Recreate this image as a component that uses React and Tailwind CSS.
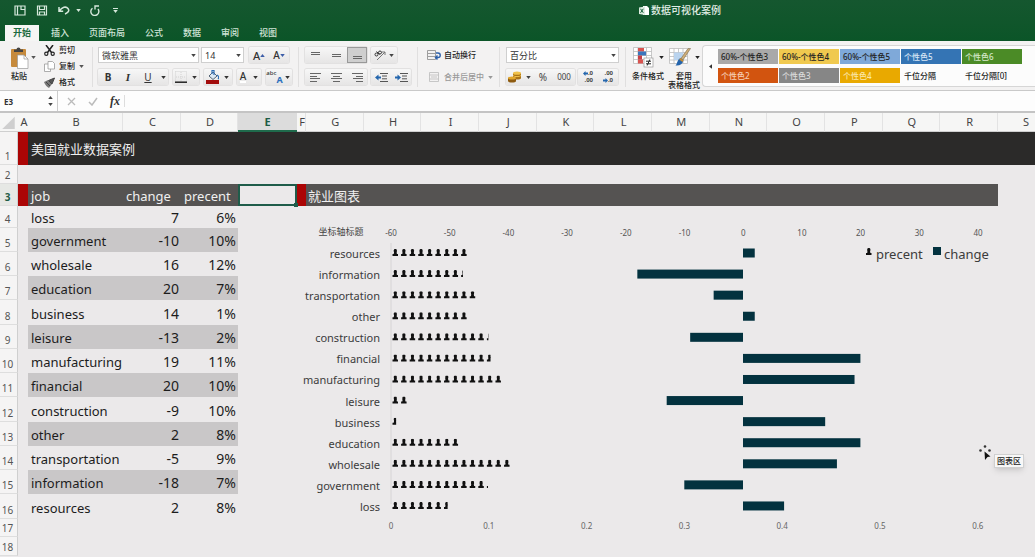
import React from "react";

const Caret = ({ className = "" }) => (
  <svg viewBox="0 0 6 4" className={`h-[3px] w-[5px] shrink-0 ${className}`} aria-hidden="true">
    <path d="M0 0h6L3 4z" fill="currentColor" />
  </svg>
);

const Icon = ({ box, className = "h-3 w-3", children }) => (
  <svg viewBox={box} className={`shrink-0 ${className}`} fill="none" aria-hidden="true">
    {children}
  </svg>
);

/* ---------- title bar and tabs ---------- */

function TitleBar() {
  return (
    <div className="grid h-5 grid-cols-[1fr_auto_1fr] items-center text-[#d5e8db]">
      <div className="flex items-center pl-[14px]">
        <button aria-label="新建" className="mr-[10px]">
          <Icon box="0 0 12 11" className="h-[11px] w-3">
            <path d="M1 1h10v9H1zM3.500 1v9M7 1v3.500h4" stroke="currentColor" strokeWidth="1.200" />
          </Icon>
        </button>
        <button aria-label="保存" className="mr-[10px]">
          <Icon box="0 0 12 11" className="h-[11px] w-3">
            <path d="M1.500 1h9v9h-9zM3.500 1v3.500h5V1M3.500 10V7h5v3" stroke="currentColor" strokeWidth="1.200" />
          </Icon>
        </button>
        <button aria-label="撤销" className="flex items-center gap-[6px]">
          <Icon box="0 0 12 10" className="h-[10px] w-3">
            <path d="M1 2v4.200h4.200M1.300 6C4 2 8 1 10 3.500S9.500 8 7 9" stroke="currentColor" strokeWidth="1.500" />
          </Icon>
          <Caret className="h-[2px] w-[3px]" />
        </button>
        <button aria-label="恢复" className="ml-2">
          <Icon box="0 0 12 11" className="h-[11px] w-3">
            <path d="M3.500 3.200A4 4 0 1 0 9 4M6 4.500V1h4" stroke="currentColor" strokeWidth="1.400" />
          </Icon>
        </button>
        <button aria-label="自定义工具栏" className="ml-3 flex flex-col items-center gap-[1px]">
          <span className="h-px w-[5px] bg-current" />
          <Caret />
        </button>
      </div>
      <h1 className="col-start-2 ml-[325px] flex items-center gap-[2px] text-[10px] leading-none font-medium text-[#e0ece4]">
        <Icon box="0 0 10 11" className="h-[11px] w-[10px]">
          <path d="M4 1h4l2 2v7H4z" fill="#fff" />
          <path d="M0 2.500L6 1.500v8.500L0 9z" fill="#dcebe0" />
          <path d="M1.500 3.800l2.800 4M4.300 3.800l-2.800 4" stroke="#15603a" />
        </Icon>
        数据可视化案例
      </h1>
    </div>
  );
}

const tabs = ["开始", "插入", "页面布局", "公式", "数据", "审阅", "视图"];

function Tabs() {
  return (
    <nav className="mt-[5px] flex gap-1 pl-[5px]">
      {tabs.map((t, i) => (
        <button
          key={t}
          className={
            i === 0
              ? "h-4 bg-[#f5f5f4] px-2 text-[9px] leading-4 font-bold text-[#1b6b41]"
              : "h-4 px-2 text-[9px] leading-4 font-medium text-[#cfe3d6]"
          }
        >
          {t}
        </button>
      ))}
    </nav>
  );
}

/* ---------- ribbon ---------- */

const Group = ({ children, className = "" }) => (
  <div className={`flex h-4 shrink-0 items-center rounded-[2px] bg-linear-to-b from-[#f7f7f7] to-[#e6e5e5] ring-1 ring-[#e2e1e1] ${className}`}>
    {children}
  </div>
);

const Tool = ({ label, className = "w-5", children }) => (
  <button aria-label={label} className={`flex h-4 items-center justify-center ${className}`}>
    {children}
  </button>
);

const Divider = ({ className = "" }) => <div className={`h-10 w-px shrink-0 bg-[#e0dfdf] ${className}`} />;

function Picker({ label, value, className }) {
  return (
    <label className={`relative flex h-4 items-center border border-[#cfcfcf] bg-white ${className}`}>
      <select aria-label={label} defaultValue={value} className="h-full w-full appearance-none bg-transparent pl-[3px] text-[9px] leading-none text-[#333] outline-none">
        <option>{value}</option>
      </select>
      <Caret className="pointer-events-none absolute right-[2px] text-[#444]" />
    </label>
  );
}

const Lines = ({ d }) => (
  <Icon box="0 0 11 9" className="h-[9px] w-[11px]">
    <path d={d} stroke="#666" strokeWidth="1" />
  </Icon>
);

const alignV = [
  ["顶端对齐", "M1 1.500h9M1 3.500h9"],
  ["垂直居中", "M1 3.500h9M1 5.500h9"],
  ["底端对齐", "M1 5.500h9M1 7.500h9"],
];
const alignH = [
  ["左对齐", "M0 .500h11M0 3.500h7M0 5.500h10M0 8.500h7"],
  ["居中", "M0 .500h11M2 3.500h7M0 5.500h11M2 8.500h7"],
  ["右对齐", "M0 .500h11M4 3.500h7M1 5.500h10M4 8.500h7"],
];

function Clipboard() {
  return (
    <div className="flex shrink-0">
      <button className="flex w-[26px] flex-col items-center text-[8px] leading-[10px] font-medium text-[#222]">
        <Icon box="0 0 19 22" className="mb-[2px] h-[22px] w-[19px]">
          <rect x="1" y="2" width="15" height="18" rx="1" fill="#c68a3c" />
          <path d="M4 5V2.500h2.500a2 2 0 0 1 4 0H13V5z" fill="#444" />
          <path d="M7.500 8H14l4 4v9.500H7.500z" fill="#fff" stroke="#999" strokeWidth=".7" />
          <path d="M14 8v4h4" stroke="#999" strokeWidth=".7" />
        </Icon>
        粘贴
      </button>
      <Caret className="mt-[9px] -ml-px text-[#555]" />
      <div className="-mt-[2px] ml-2 flex flex-col gap-[6px] text-[8px] leading-[10px] font-medium text-[#222]">
        <button className="flex h-[10px] items-center gap-1">
          <Icon box="0 0 11 11" className="h-[11px] w-[11px]">
            <path d="M2 0l5.500 7.500M9 0L3.500 7.500" stroke="#222" strokeWidth="1.500" />
            <circle cx="2.300" cy="8.800" r="1.600" stroke="#222" strokeWidth="1.200" />
            <circle cx="8.700" cy="8.800" r="1.600" stroke="#222" strokeWidth="1.200" />
          </Icon>
          剪切
        </button>
        <button className="flex h-[10px] items-center gap-1">
          <Icon box="0 0 11 11" className="h-[11px] w-[11px]">
            <path d="M.500 3h4l2 2v5.500h-6z" fill="#fff" stroke="#999" strokeWidth=".8" />
            <path d="M4 .500h4.500l2 2V8H4z" fill="#fff" stroke="#999" strokeWidth=".8" />
          </Icon>
          复制
          <Caret className="text-[#555]" />
        </button>
        <button className="flex h-[10px] items-center gap-1">
          <Icon box="0 0 11 11" className="h-[11px] w-[11px]">
            <path d="M0 5l4-2 4 4-3 4C3 10 1 8 0 5z" fill="#777" />
            <path d="M2 5l4 4M4.500 3.500L8 7l2.500-6z" stroke="#444" strokeWidth="1" fill="#555" />
          </Icon>
          格式
        </button>
      </div>
    </div>
  );
}

function FontTools() {
  return (
    <div className="flex shrink-0 flex-col gap-[6px]">
      <div className="flex">
        <Picker label="字体" value="微软雅黑" className="w-[101px]" />
        <Picker label="字号" value="14" className="ml-[2px] w-[43px]" />
        <Group className="ml-[5px]">
          <Tool label="增大字号">
            <span className="text-[11px] leading-none font-medium text-[#333]">A</span>
            <Caret className="rotate-180 text-[#3c5da8]" />
          </Tool>
          <Tool label="减小字号">
            <span className="text-[10px] leading-none font-medium text-[#333]">A</span>
            <Caret className="text-[#3c5da8]" />
          </Tool>
        </Group>
      </div>
      <div className="flex gap-[5px] text-[#333]">
        <Group>
          <Tool label="加粗"><b className="text-[10px] leading-none">B</b></Tool>
          <Tool label="倾斜"><i className="font-['Liberation_Serif',serif] text-[11px] leading-none font-bold">I</i></Tool>
          <Tool label="下划线"><u className="text-[10px] leading-none">U</u></Tool>
          <Tool label="下划线选项" className="w-[10px]"><Caret /></Tool>
        </Group>
        <Group>
          <Tool label="边框" className="w-4">
            <Icon box="0 0 12 12">
              <path d="M.500.500h11v10M.500.500v10M6 1v10M1 6h10" stroke="#d2d2d2" strokeDasharray="1 1" />
              <path d="M0 11.200h12" stroke="#222" strokeWidth="1.500" />
            </Icon>
          </Tool>
          <Tool label="边框选项" className="w-[10px]"><Caret /></Tool>
        </Group>
        <Group>
          <Tool label="填充颜色" className="w-4">
            <Icon box="0 0 13 14" className="h-[14px] w-[13px]">
              <path d="M3 6l4-4 4 4-4 3.500z" fill="#dce9f5" stroke="#456" strokeWidth=".9" />
              <path d="M6 4V.500h2V5M11 5c2 1 2 3 1 4" stroke="#2d6db5" strokeWidth="1.200" />
              <rect y="10" width="13" height="4" fill="#a30d0d" />
            </Icon>
          </Tool>
          <Tool label="填充选项" className="w-3"><Caret /></Tool>
        </Group>
        <Group>
          <Tool label="字体颜色" className="w-3">
            <span className="border-b-2 border-white text-[10px] leading-[10px] font-medium">A</span>
          </Tool>
          <Tool label="字体颜色选项" className="w-3"><Caret /></Tool>
        </Group>
        <Group>
          <Tool label="拼音" className="w-[17px]">
            <span className="self-start text-[6px] leading-[8px] font-medium">abc</span>
            <span className="self-end text-[9px] leading-[10px] font-bold text-[#2c6fbd]">A</span>
          </Tool>
          <Tool label="拼音选项" className="w-[9px]"><Caret /></Tool>
        </Group>
      </div>
    </div>
  );
}

function AlignTools() {
  return (
    <div className="flex shrink-0 flex-col gap-[6px] text-[#444]">
      <div className="flex gap-1">
        <Group>
          {alignV.map(([n, d], i) => (
            <Tool key={n} label={n} className={i === 2 ? "w-5 border border-[#999] bg-[#cfcfcf]" : "w-[21px]"}>
              <Lines d={d} />
            </Tool>
          ))}
        </Group>
        <Group>
          <Tool label="方向" className="w-[26px] gap-[3px]">
            <Icon box="0 0 12 12">
              <path d="M3 11L11 3M8 3h3v3" stroke="#777" />
              <circle cx="2.500" cy="5.500" r="1.500" stroke="#333" />
              <path d="M2.500 2.500l3 3" stroke="#333" />
              <circle cx="6" cy="3.500" r="1.500" stroke="#333" />
            </Icon>
            <Caret />
          </Tool>
        </Group>
      </div>
      <div className="flex gap-1">
        <Group>
          {alignH.map(([n, d], i) => (
            <Tool key={n} label={n} className={i === 2 ? "w-5" : "w-[21px]"}>
              <Lines d={d} />
            </Tool>
          ))}
        </Group>
        <Group>
          <Tool label="减少缩进">
            <Icon box="0 0 13 9" className="h-[9px] w-[13px]">
              <path d="M0 4.500L3.500 1.500v2H6v2H3.500v2z" fill="#2466ad" />
              <path d="M5 .500h8M7 3h5M7 5.800h5M5 8.500h8" stroke="#555" />
            </Icon>
          </Tool>
          <Tool label="增加缩进">
            <Icon box="0 0 13 9" className="h-[9px] w-[13px]">
              <path d="M6 4.500L2.500 1.500v2H0v2h2.500v2z" fill="#2466ad" />
              <path d="M5 .500h8M7 3h5M7 5.800h5M5 8.500h8" stroke="#555" />
            </Icon>
          </Tool>
        </Group>
      </div>
    </div>
  );
}

function WrapTools() {
  return (
    <div className="flex shrink-0 flex-col gap-[6px] text-[8px] leading-none font-medium">
      <button className="flex h-4 items-center gap-[3px] text-[#222]">
        <Icon box="0 0 14 10" className="h-[10px] w-[14px]">
          <path d="M.500.500h8v9h-8zM1 3.500h7M1 6.500h7" stroke="#888" strokeWidth=".8" />
          <path d="M9 3h2a2 2 0 0 1 0 4.500H9M10.500 5.500L8.500 7.500l2 2" stroke="#2f62ac" strokeWidth="1.400" />
        </Icon>
        自动换行
      </button>
      <button className="flex h-4 items-center gap-[3px] text-[#999]">
        <Icon box="0 0 14 10" className="h-[10px] w-[14px]">
          <path d="M2.500.500h9v9h-9zM2.500 3h9M2.500 7h9M4 5h6" stroke="#bbb" strokeWidth=".8" />
        </Icon>
        合并后居中
        <Caret className="ml-px h-[2px] w-1" />
      </button>
    </div>
  );
}

function NumberTools() {
  return (
    <div className="flex shrink-0 flex-col gap-[6px] text-[#444]">
      <Picker label="数字格式" value="百分比" className="w-[113px]" />
      <div className="flex gap-[3px]">
        <Group>
          <Tool label="会计格式" className="w-[27px] gap-1">
            <Icon box="0 0 14 12" className="h-3 w-[14px]">
              <path d="M5 2v5c0 2 8 2 8 0V2z" fill="#a87116" />
              <ellipse cx="9" cy="2.200" rx="4" ry="1.600" fill="#f0c14b" />
              <path d="M5 4.500c1 1.500 7 1.500 8 0" stroke="#f0c14b" />
              <path d="M0 7v3c0 2 8 2 8 0V7z" fill="#8e5b10" />
              <ellipse cx="4" cy="7" rx="4" ry="1.600" fill="#e0a52d" />
            </Icon>
            <Caret />
          </Tool>
          <Tool label="百分比样式"><span className="text-[10px] leading-none">%</span></Tool>
          <Tool label="千位分隔样式" className="w-[22px]"><span className="text-[8px] leading-none">000</span></Tool>
        </Group>
        <Group>
          <Tool label="增加小数位数" className="w-5">
            <span className="flex flex-col text-right text-[6px] leading-[7px] font-bold">
              <span className="flex items-center justify-end">
                <Icon box="0 0 5 5" className="h-[5px] w-[5px]"><path d="M0 2.500L2.500 0v1.500H5v2H2.500V5z" fill="#2466ad" /></Icon>.0
              </span>
              <span>.00</span>
            </span>
          </Tool>
          <Tool label="减少小数位数" className="w-5">
            <span className="flex flex-col text-right text-[6px] leading-[7px] font-bold">
              <span>.00</span>
              <span className="flex items-center justify-end">
                <Icon box="0 0 5 5" className="h-[5px] w-[5px]"><path d="M5 2.500L2.500 0v1.500H0v2h2.500V5z" fill="#2466ad" /></Icon>.0
              </span>
            </span>
          </Tool>
        </Group>
      </div>
    </div>
  );
}

function FormatTools() {
  return (
    <div className="flex shrink-0 text-[8px] leading-[9px] font-medium text-[#222]">
      <button className="flex w-8 flex-col items-center whitespace-nowrap">
        <span className="mb-[3px] flex h-[21px] items-start gap-[5px]">
          <Icon box="0 0 21 21" className="h-[21px] w-[21px]">
            <path d="M.500.500h18v16H.500zM.500 4.500h18M.500 8.500h18M.500 12.500h18M5 .500v16M13.500.500v16" fill="#fff" stroke="#bbb" strokeWidth=".8" />
            <path d="M5 1h6v3.500H5zM5 12.500h5v4H5z" fill="#d9534f" />
            <path d="M5 4.500h8v4H5z" fill="#3b76bd" />
            <path d="M5 8.500h4v4H5z" fill="#c73f45" />
            <rect x="11" y="11" width="9" height="9" fill="#fff" stroke="#999" strokeWidth=".7" />
            <path d="M13 14.200h5M13 16.800h5M16.800 12.500l-2.600 6" stroke="#222" strokeWidth="1" />
          </Icon>
          <Caret className="mt-[9px]" />
        </span>
        条件格式
      </button>
      <button className="ml-1 flex w-8 flex-col items-center whitespace-nowrap">
        <span className="mb-[3px] flex h-[21px] items-start gap-1">
          <Icon box="0 0 22 21" className="h-[21px] w-[22px]">
            <path d="M.500 1.500h18v15H.500zM.500 5.500h18M.500 9.500h18M.500 13h18M5 1.500v15M9.500 1.500v15M14 1.500v15" fill="#fff" stroke="#bbb" strokeWidth=".8" />
            <path d="M5 5.500h9v7.500H5z" fill="#b9d3ee" />
            <path d="M21.500 1.500L14 13l-2-1.500 7-10z" fill="#cfae78" stroke="#7b6b4e" strokeWidth=".6" />
            <path d="M11.500 11l3 2.500c-1 4-4 5.500-8 5 2-1.500 1.500-6 5-7.500z" fill="#2464ac" />
            <path d="M11.500 11l3 2.500-1 1.500-3.300-2.600z" fill="#c78c32" />
          </Icon>
          <Caret className="mt-[9px]" />
        </span>
        <span className="block">套用</span>
        <span className="block">表格格式</span>
      </button>
    </div>
  );
}

const styles = [
  ["60%-个性色3", "bg-[#a9a9a9] text-[#222]"],
  ["60%-个性色4", "bg-[#f0c94f] text-[#222]"],
  ["60%-个性色5", "bg-[#7fa9d9] text-[#222]"],
  ["个性色5", "bg-[#3474b4] text-[#d7e6f5]"],
  ["个性色6", "bg-[#4b8b26] text-[#d5e8c8]"],
  ["个性色2", "bg-[#d2540f] text-[#f6cdb4]"],
  ["个性色3", "bg-[#868686] text-[#dcdcdc]"],
  ["个性色4", "bg-[#e9a900] text-[#fbe6a8]"],
  ["千位分隔", "text-[#222]"],
  ["千位分隔[0]", "text-[#222]"],
];

function StyleGallery() {
  return (
    <div className="-mt-[2px] flex h-[42px] min-w-0 flex-1 items-center overflow-hidden rounded-l-sm border border-r-0 border-[#d6d6d6] bg-[#fcfcfc]">
      <button aria-label="上一组样式" className="flex h-full w-[15px] shrink-0 items-center justify-center text-[#333]">
        <Caret className="rotate-90" />
      </button>
      <div className="grid shrink-0 grid-cols-[repeat(5,60px)] gap-x-px gap-y-1">
        {styles.map(([n, c]) => (
          <button key={n} className={`h-[15px] px-[3px] text-left text-[8px] leading-[15px] font-medium whitespace-nowrap ${c}`}>
            {n}
          </button>
        ))}
      </div>
    </div>
  );
}

function Ribbon() {
  return (
    <div className="flex h-[50px] items-start border-b border-[#c9c9c9] bg-[#f3f2f2] pt-[6px] pl-[6px]">
      <Clipboard />
      <Divider className="mr-[5px] ml-2" />
      <FontTools />
      <Divider className="mx-[6px]" />
      <AlignTools />
      <Divider className="mr-[9px] ml-[6px]" />
      <WrapTools />
      <Divider className="mx-[6px]" />
      <NumberTools />
      <Divider className="mx-[6px]" />
      <FormatTools />
      <div className="w-[2px] shrink-0" />
      <StyleGallery />
    </div>
  );
}

/* ---------- formula bar ---------- */

function FormulaBar() {
  return (
    <div className="flex h-[22px] items-center border-b-2 border-[#c4c4c4] bg-[#fdfdfd]">
      <input aria-label="名称框" defaultValue="E3" className="w-12 bg-transparent pl-1 text-[8px] leading-none font-bold text-[#333] outline-none" />
      <div className="flex flex-col gap-1 text-[#444]">
        <Caret className="rotate-180" />
        <Caret />
      </div>
      <div className="ml-1 h-full w-px bg-[#ccc]" />
      <button aria-label="取消" className="ml-[9px]">
        <Icon box="0 0 9 9" className="h-[9px] w-[9px]"><path d="M1 1l7 7M8 1L1 8" stroke="#bbb" strokeWidth="1.300" /></Icon>
      </button>
      <button aria-label="输入" className="ml-3">
        <Icon box="0 0 10 9" className="h-[9px] w-[10px]"><path d="M1 5l3 3 5-7" stroke="#bbb" strokeWidth="1.500" /></Icon>
      </button>
      <button aria-label="插入函数" className="ml-3 font-['Liberation_Serif',serif] text-[12px] leading-none font-bold text-[#333] italic">fx</button>
      <div className="ml-1 h-3 w-px bg-[#ddd]" />
      <input aria-label="编辑栏" className="h-full min-w-0 flex-1 bg-transparent px-1 text-[9px] outline-none" />
    </div>
  );
}

/* ---------- chart ---------- */

const bars = [
  ["resources", 9, 2],
  ["information", 8.4, -18],
  ["transportation", 10, -5],
  ["other", 9, 2],
  ["construction", 11.35, -9],
  ["financial", 11.6, 20],
  ["manufacturing", 13, 19],
  ["leisure", 2, -13],
  ["business", 0.6, 14],
  ["education", 8, 20],
  ["wholesale", 14, 16],
  ["government", 11.3, -10],
  ["loss", 6.6, 7],
];

const AXIS = 94;
const ZERO = 446;
const UNIT = 5.87;
const PERSON = 8.58;

const Person = ({ x, y = 0 }) => (
  <g transform={`translate(${x} ${y})`} fill="#111">
    <rect x="1.300" y="0" width="3" height="3.600" rx="1.200" />
    <path d="M1.700 2.500h2.200l.5 2.500h1.100v2H0V5h1.200z" />
  </g>
);

function Chart() {
  return (
    <svg viewBox="0 0 701 350" className="block w-full overflow-visible" role="img" aria-label="就业图表">
      <text x="44" y="29" textAnchor="middle" className="fill-[#444] text-[9px]">坐标轴标题</text>
      {Array.from({ length: 11 }, (_, i) => (
        <text key={i} x={AXIS + i * 10 * UNIT} y="30" textAnchor="middle" className="fill-[#555] text-[8px]">
          {i * 10 - 60}
        </text>
      ))}
      <path d="M94 37v261" stroke="#d6d4d5" />
      {bars.map(([name, people, change], i) => {
        const mid = 47 + i * 21.08;
        return (
          <g key={name}>
            <text x="83" y={mid + 5} textAnchor="end" className="fill-[#3c3c3c] text-[11px]">{name}</text>
            <svg x={AXIS} y={mid - 4} width={people * PERSON} height="8">
              {Array.from({ length: Math.ceil(people) }, (_, n) => (
                <Person key={n} x={n * PERSON + 1.5} />
              ))}
            </svg>
            <rect
              x={change < 0 ? ZERO + change * UNIT : ZERO}
              y={mid - 4.5}
              width={Math.abs(change) * UNIT}
              height="9"
              fill="#03323f"
            />
          </g>
        );
      })}
      {["0", "0.1", "0.2", "0.3", "0.4", "0.5", "0.6"].map((t, i) => (
        <text key={t} x={AXIS + i * 97.8} y="323" textAnchor="middle" className="fill-[#666] text-[8px]">{t}</text>
      ))}
      <Person x={569} y={42} />
      <text x="579" y="53" className="fill-[#3c3c3c] text-[13px]">precent</text>
      <rect x="636" y="41" width="8" height="8" fill="#03323f" />
      <text x="647" y="53" className="fill-[#3c3c3c] text-[13px]">change</text>
    </svg>
  );
}

/* ---------- sheet ---------- */

const letters = "ABCDEFGHIJKLMNOPQRS".split("");

const jobs = [
  ["loss", 7, "6%"],
  ["government", -10, "10%"],
  ["wholesale", 16, "12%"],
  ["education", 20, "7%"],
  ["business", 14, "1%"],
  ["leisure", -13, "2%"],
  ["manufacturing", 19, "11%"],
  ["financial", 20, "10%"],
  ["construction", -9, "10%"],
  ["other", 2, "8%"],
  ["transportation", -5, "9%"],
  ["information", -18, "7%"],
  ["resources", 2, "8%"],
];

const rowHeight = (i) => (i === 0 ? "h-[22px]" : i % 4 === 0 ? "h-[25px]" : "h-6");

const RowHead = ({ n, active }) => (
  <th
    scope="row"
    className={`border-r border-b border-r-[#cfcfcf] border-b-[#dedede] pr-[2px] pb-[2px] text-center align-bottom text-[10px] leading-3 ${
      active ? "bg-[#e6e8e5] font-bold text-[#1f5c45]" : "bg-[#f5f4f4] font-normal text-[#555]"
    }`}
  >
    {n}
  </th>
);

function Sheet() {
  return (
    <table className="w-full table-fixed border-separate border-spacing-0 text-[13px] leading-5 text-[#1c1c1c]">
      <colgroup>
        <col className="w-[18px]" />
        <col className="w-[10px]" />
        <col className="w-[95px]" />
        <col className="w-[58px]" />
        <col className="w-[57px]" />
        <col className="w-[59px]" />
        <col className="w-[9px]" />
        {letters.slice(6, 18).map((l) => <col key={l} />)}
        <col className="w-[37px]" />
      </colgroup>
      <thead>
        <tr className="h-[19px] bg-[#f6f6f5] text-[11px] leading-4 text-[#444]">
          <td className="border-b border-[#cfcfcf]">
            <svg viewBox="0 0 18 18" className="block h-4 w-[17px]" aria-hidden="true"><path d="M16 3v14H2z" fill="#cfcfcf" /></svg>
          </td>
          {letters.map((l) => (
            <th
              key={l}
              scope="col"
              className={
                l === "E"
                  ? "border-b-2 border-[#1f6b4c] bg-[#dcdcdc] font-bold text-[#1f5c45]"
                  : l === "S"
                    ? "border-b border-b-[#cfcfcf] pl-[25px] text-left font-normal"
                    : l === "A"
                      ? "border-b border-b-[#cfcfcf] pl-[2px] text-center font-normal"
                      : "border-r border-b border-r-[#e3e3e3] border-b-[#cfcfcf] pl-[2px] text-center font-normal"
              }
            >
              {l}
            </th>
          ))}
        </tr>
      </thead>
      <tbody>
        <tr className="h-[33px]">
          <RowHead n={1} />
          <td className="bg-[#ab0505]" />
          <td colSpan={18} className="bg-[#2b2a29] pl-[3px] text-[#efefef]">美国就业数据案例</td>
        </tr>
        <tr className="h-[19px]">
          <RowHead n={2} />
          <td colSpan={19} />
        </tr>
        <tr className="h-[22px] text-[#f0f0f0]">
          <RowHead n={3} active />
          <td className="bg-[#ab0505]" />
          <td className="bg-[#555352] pt-[2px] pl-[3px]">job</td>
          <td className="bg-[#555352] pt-[2px] pl-[3px]">change</td>
          <td className="bg-[#555352] pt-[2px] pl-[3px]">precent</td>
          <td className="relative border-2 border-[#1f5c4a]">
            <span className="absolute -right-[3px] -bottom-[3px] h-1 w-1 bg-[#1f5c4a]" />
          </td>
          <td className="bg-[#ab0505]" />
          <td colSpan={12} className="bg-[#555352] pt-[2px] pl-[2px]">就业图表</td>
          <td />
        </tr>
        {jobs.map(([job, change, precent], i) => {
          const band = i % 2 ? "bg-[#c9c7c8]" : "";
          return (
            <tr key={job} className={rowHeight(i)}>
              <RowHead n={i + 4} />
              <td />
              <td className={`pt-[2px] pl-[3px] ${band}`}>{job}</td>
              <td className={`pt-[2px] pr-[2px] text-right text-[14px] ${band}`}>{change}</td>
              <td className={`pt-[2px] pr-[2px] text-right text-[14px] ${band}`}>{precent}</td>
              <td />
              {i === 0 && (
                <td colSpan={13} rowSpan={15} className="relative align-top">
                  <Chart />
                  <div className="absolute top-[239px] -right-[26px] flex items-start">
                    <svg viewBox="0 0 16 18" className="h-[18px] w-4" aria-hidden="true">
                      <g fill="#333">
                        <circle cx="6" cy="1.500" r="1.300" />
                        <circle cx="1.500" cy="5.500" r="1.300" />
                        <circle cx="10.500" cy="5.500" r="1.300" />
                      </g>
                      <path d="M5.500 6.500l6 5-3 .500-2.500 3z" fill="#111" />
                    </svg>
                    <span role="tooltip" className="mt-[9px] -ml-px border border-[#d0d0d0] bg-[#f8f8f8] px-[2px] text-[8px] leading-3 font-medium text-[#222] shadow-md">
                      图表区
                    </span>
                  </div>
                </td>
              )}
              <td />
            </tr>
          );
        })}
        <tr className="h-[18px]">
          <RowHead n={17} />
          <td colSpan={5} />
          <td />
        </tr>
        <tr className="h-[19px]">
          <RowHead n={18} />
          <td colSpan={5} />
          <td />
        </tr>
      </tbody>
    </table>
  );
}

export default function App() {
  return (
    <div className="min-h-screen overflow-x-hidden bg-[#ebe9ea] font-['Noto_Sans','Noto_Sans_CJK_SC',sans-serif]">
      <header className="bg-linear-to-b from-[#15572f] to-[#0b5528]">
        <TitleBar />
        <Tabs />
      </header>
      <Ribbon />
      <FormulaBar />
      <main>
        <Sheet />
      </main>
    </div>
  );
}
